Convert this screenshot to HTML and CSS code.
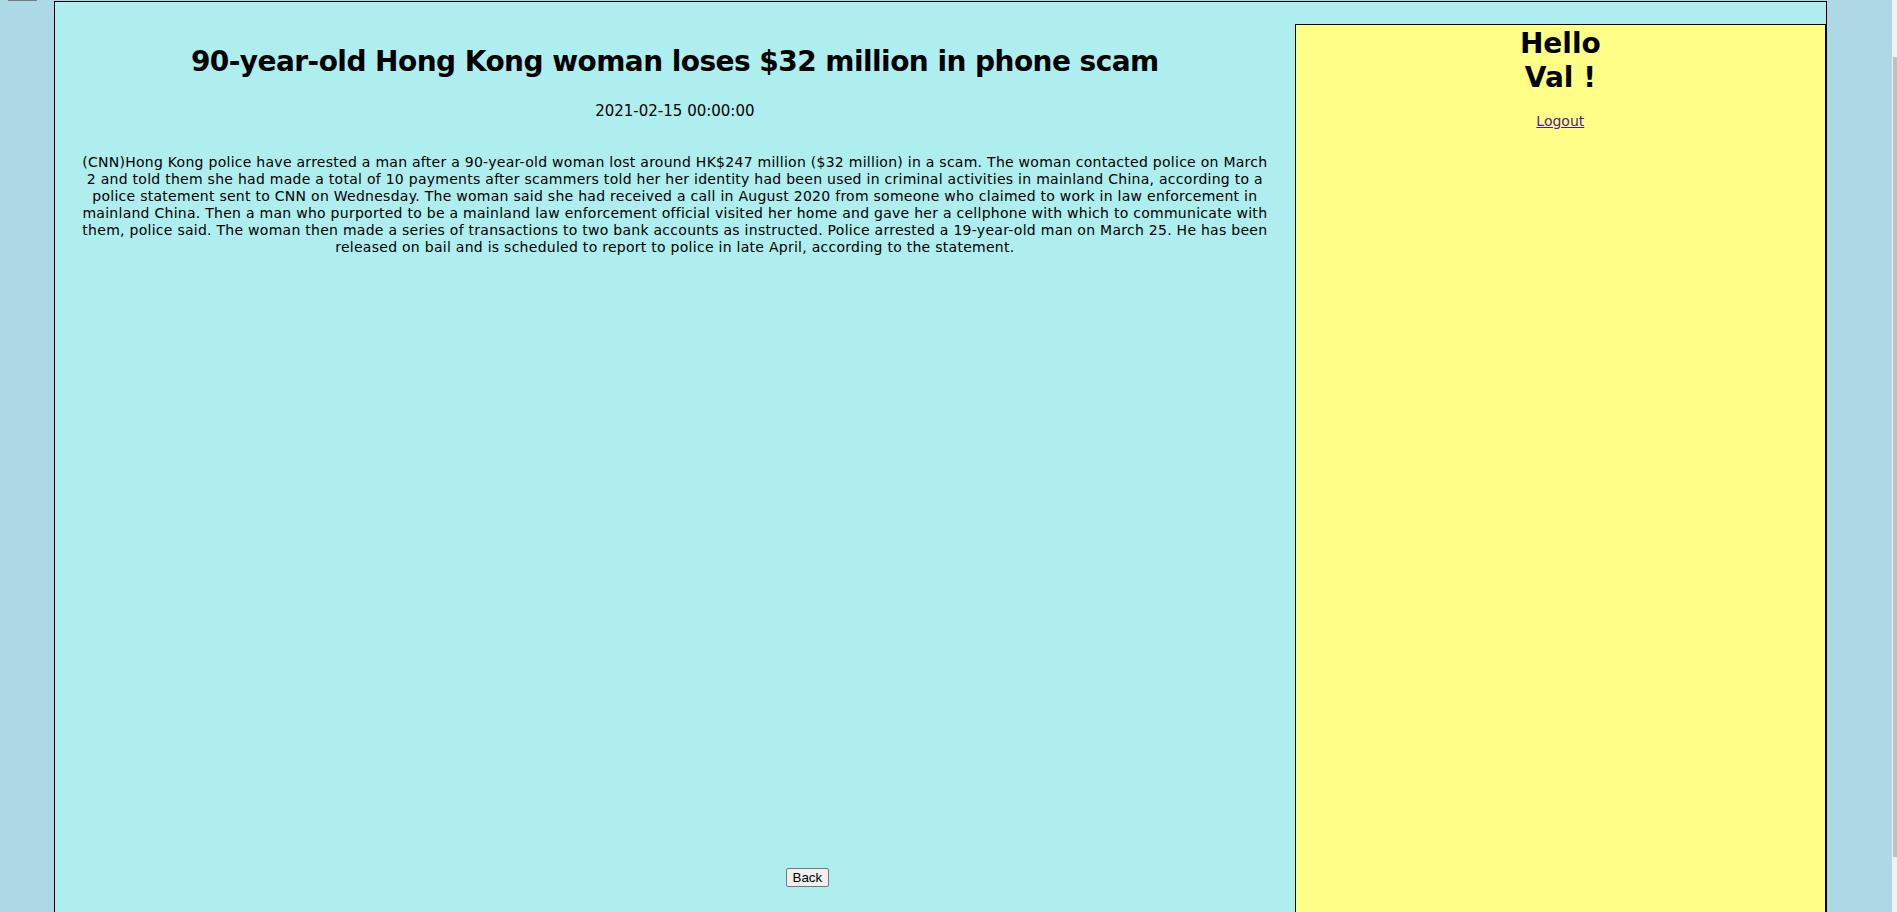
FILE: index.html
```html
<!DOCTYPE html>
<html lang="en">
<head>
<meta charset="utf-8">
<title>News</title>
<link rel="stylesheet" href="styles.css">
</head>
<body>
<div class="stub"></div>
<div class="page">
  <div class="main">
    <h1 class="title">90-year-old Hong Kong woman loses $32 million in phone scam</h1>
    <div class="date">2021-02-15 00:00:00</div>
    <p class="article">(CNN)Hong Kong police have arrested a man after a 90-year-old woman lost around HK$247 million ($32 million) in a scam. The woman contacted police on March 2 and told them she had made a total of 10 payments after scammers told her her identity had been used in criminal activities in mainland China, according to a police statement sent to CNN on Wednesday. The woman said she had received a call in August 2020 from someone who claimed to work in law enforcement in mainland China. Then a man who purported to be a mainland law enforcement official visited her home and gave her a cellphone with which to communicate with them, police said. The woman then made a series of transactions to two bank accounts as instructed. Police arrested a 19-year-old man on March 25. He has been released on bail and is scheduled to report to police in late April, according to the statement.</p>
    <div class="back"><button class="back-btn" type="button">Back</button></div>
  </div>
  <aside class="side">
    <h1 class="hello">Hello<br>Val !</h1>
    <div class="logout"><a href="#" class="logout-link">Logout</a></div>
  </aside>
</div>
<div class="scrollbar"><div class="thumb"></div></div>
</body>
</html>
```
FILE: styles.css
```css
html, body {
  margin: 0;
  padding: 0;
}
body {
  background: #add8e6;
  height: 912px;
  overflow: hidden;
  font-family: "DejaVu Sans", Verdana, sans-serif;
  font-size: 14px;
  color: #000;
}
.stub {
  width: 29px;
  height: 1px;
  margin-left: 8px;
  background: #7a7a7a;
}
.page {
  margin-left: 54px;
  width: 1773px;
  box-sizing: border-box;
  border: 1px solid #000;
  border-bottom: none;
  background: #afeeee;
  padding-top: 22px;
  display: flex;
  align-items: flex-start;
  height: 1000px;
}
.main {
  flex: 0 0 70%;
}
.title {
  font-size: 28px;
  font-weight: bold;
  line-height: 34px;
  letter-spacing: -0.55px;
  margin: 21px 0 0;
  text-align: center;
}
.date {
  font-size: 15px;
  line-height: 17px;
  margin-top: 24px;
  text-align: center;
}
.article {
  margin: 34px 0 0;
  padding: 0 23px;
  line-height: 17px;
  letter-spacing: 0.27px;
  text-align: center;
}
.back {
  margin-top: 612px;
  padding-left: 265px;
  text-align: center;
}
.back-btn {
  font-family: "Liberation Sans", Arial, sans-serif;
  font-size: 13.33px;
  background: #efefef;
  border: 1px solid #767676;
  border-radius: 2px;
  padding: 1px 6px;
  color: #000;
}
.side {
  flex: 0 0 30%;
  box-sizing: border-box;
  border: 1px solid #000;
  border-bottom: none;
  background: #ffff88;
  min-height: 960px;
  padding-top: 2px;
  text-align: center;
}
.hello {
  font-size: 28px;
  font-weight: bold;
  line-height: 34px;
  margin: 0 0 18px;
}
.logout {
  line-height: 17px;
}
.logout-link {
  color: #551a8b;
  text-decoration: underline;
}
.scrollbar {
  position: fixed;
  top: 0;
  right: 0;
  width: 5px;
  height: 912px;
  background: #f1f1f1;
}
.thumb {
  margin-top: 57px;
  margin-left: 1px;
  height: 800px;
  background: #c1c1c1;
}
```
